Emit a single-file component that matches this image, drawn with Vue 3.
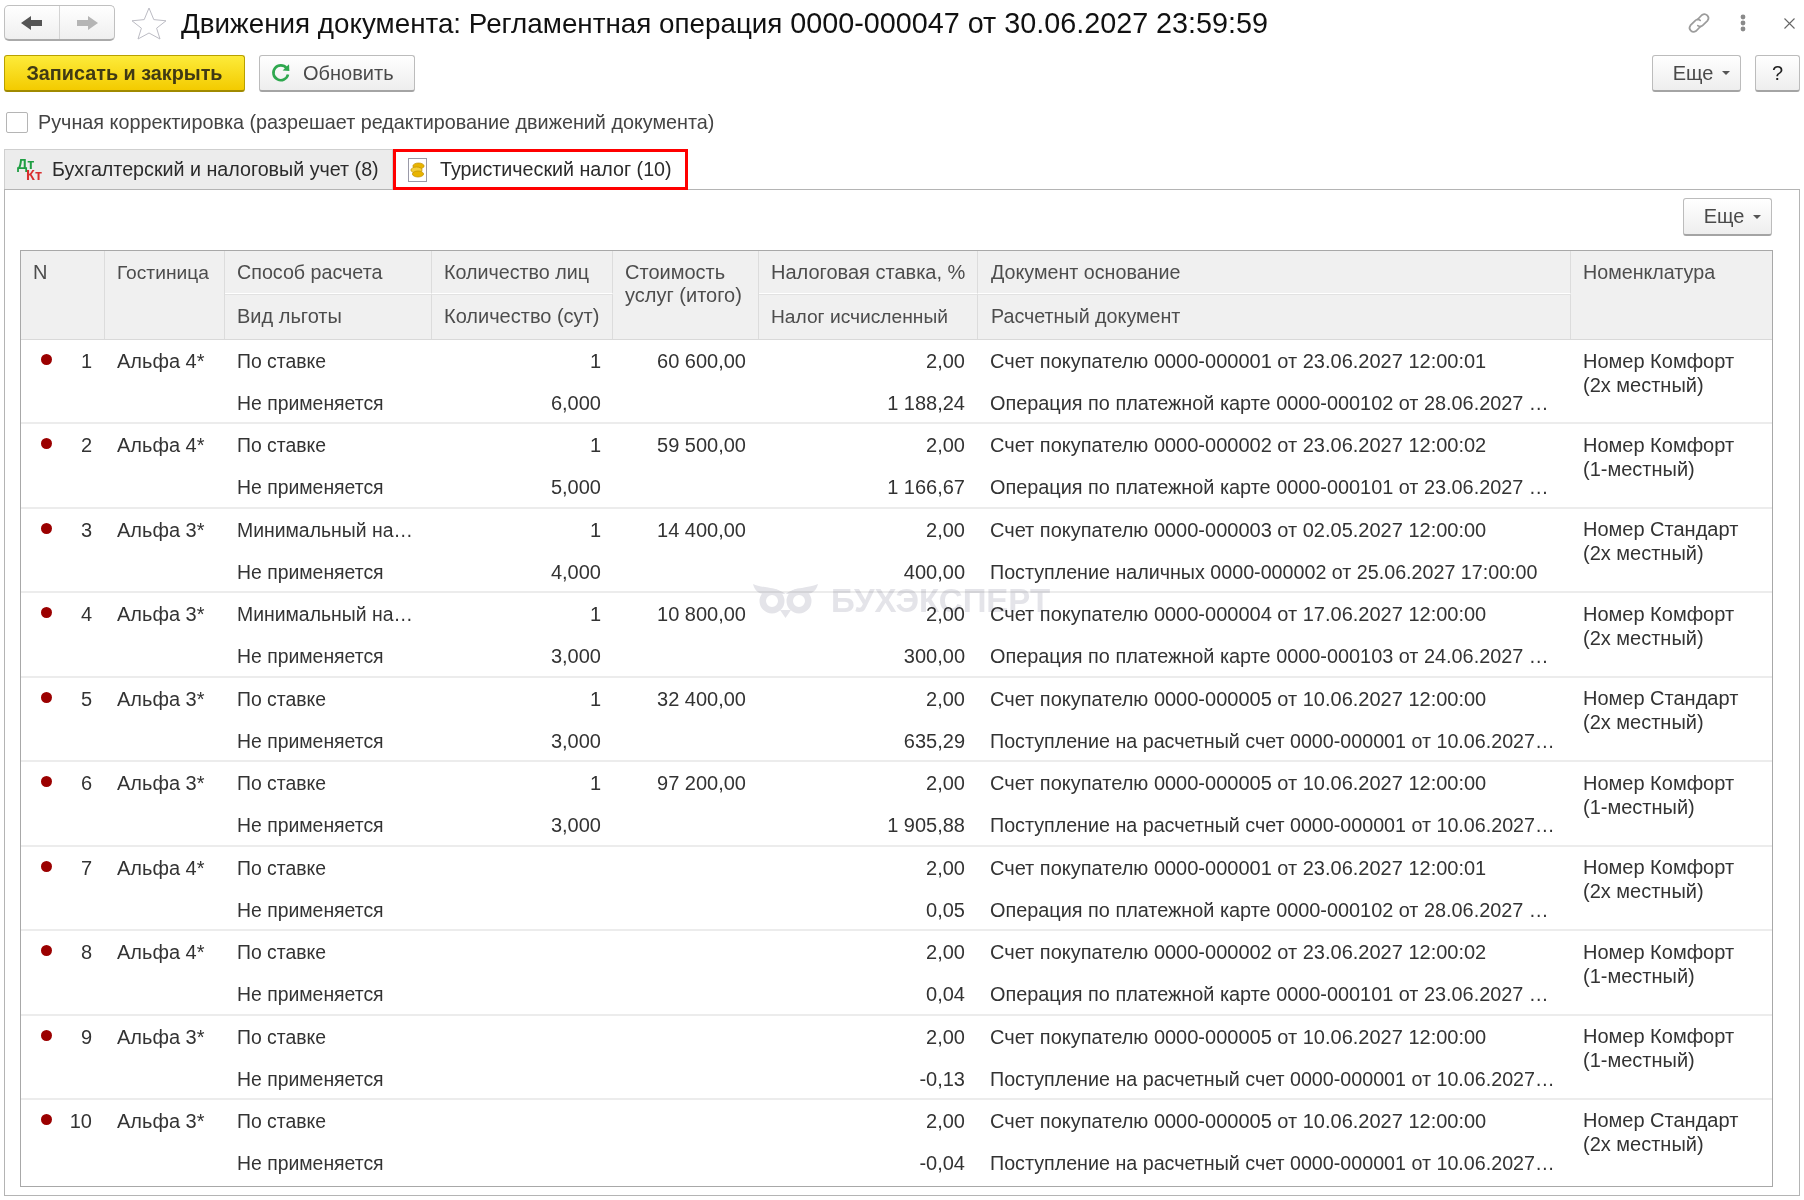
<script setup>
const R = 'Не применяется'
const rows = [
  { n: 1, hotel: 'Альфа 4*', way: 'По ставке', qty: '1', days: '6,000', cost: '60 600,00', tax: '1 188,24', d1: 'Счет покупателю 0000-000001 от 23.06.2027 12:00:01', d2: 'Операция по платежной карте 0000-000102 от 28.06.2027 …', nom: ['Номер Комфорт', '(2х местный)'] },
  { n: 2, hotel: 'Альфа 4*', way: 'По ставке', qty: '1', days: '5,000', cost: '59 500,00', tax: '1 166,67', d1: 'Счет покупателю 0000-000002 от 23.06.2027 12:00:02', d2: 'Операция по платежной карте 0000-000101 от 23.06.2027 …', nom: ['Номер Комфорт', '(1-местный)'] },
  { n: 3, hotel: 'Альфа 3*', way: 'Минимальный на…', qty: '1', days: '4,000', cost: '14 400,00', tax: '400,00', d1: 'Счет покупателю 0000-000003 от 02.05.2027 12:00:00', d2: 'Поступление наличных 0000-000002 от 25.06.2027 17:00:00', nom: ['Номер Стандарт', '(2х местный)'] },
  { n: 4, hotel: 'Альфа 3*', way: 'Минимальный на…', qty: '1', days: '3,000', cost: '10 800,00', tax: '300,00', d1: 'Счет покупателю 0000-000004 от 17.06.2027 12:00:00', d2: 'Операция по платежной карте 0000-000103 от 24.06.2027 …', nom: ['Номер Комфорт', '(2х местный)'] },
  { n: 5, hotel: 'Альфа 3*', way: 'По ставке', qty: '1', days: '3,000', cost: '32 400,00', tax: '635,29', d1: 'Счет покупателю 0000-000005 от 10.06.2027 12:00:00', d2: 'Поступление на расчетный счет 0000-000001 от 10.06.2027…', nom: ['Номер Стандарт', '(2х местный)'] },
  { n: 6, hotel: 'Альфа 3*', way: 'По ставке', qty: '1', days: '3,000', cost: '97 200,00', tax: '1 905,88', d1: 'Счет покупателю 0000-000005 от 10.06.2027 12:00:00', d2: 'Поступление на расчетный счет 0000-000001 от 10.06.2027…', nom: ['Номер Комфорт', '(1-местный)'] },
  { n: 7, hotel: 'Альфа 4*', way: 'По ставке', qty: '', days: '', cost: '', tax: '0,05', d1: 'Счет покупателю 0000-000001 от 23.06.2027 12:00:01', d2: 'Операция по платежной карте 0000-000102 от 28.06.2027 …', nom: ['Номер Комфорт', '(2х местный)'] },
  { n: 8, hotel: 'Альфа 4*', way: 'По ставке', qty: '', days: '', cost: '', tax: '0,04', d1: 'Счет покупателю 0000-000002 от 23.06.2027 12:00:02', d2: 'Операция по платежной карте 0000-000101 от 23.06.2027 …', nom: ['Номер Комфорт', '(1-местный)'] },
  { n: 9, hotel: 'Альфа 3*', way: 'По ставке', qty: '', days: '', cost: '', tax: '-0,13', d1: 'Счет покупателю 0000-000005 от 10.06.2027 12:00:00', d2: 'Поступление на расчетный счет 0000-000001 от 10.06.2027…', nom: ['Номер Комфорт', '(1-местный)'] },
  { n: 10, hotel: 'Альфа 3*', way: 'По ставке', qty: '', days: '', cost: '', tax: '-0,04', d1: 'Счет покупателю 0000-000005 от 10.06.2027 12:00:00', d2: 'Поступление на расчетный счет 0000-000001 от 10.06.2027…', nom: ['Номер Стандарт', '(2х местный)'] }
]
const isTight = (s) => s.startsWith('Поступление')
</script>

<template>
  <div class="page">
    <div class="titlebar">
      <div class="nav">
        <button class="nav-btn">
          <svg width="22" height="14" viewBox="0 0 22 14"><path d="M0 7 L10 0 V4 H21 V10 H10 V14 Z" fill="#555"/></svg>
        </button>
        <button class="nav-btn">
          <svg width="22" height="14" viewBox="0 0 22 14"><path d="M22 7 L12 0 V4 H1 V10 H12 V14 Z" fill="#b5b5b5"/></svg>
        </button>
      </div>
      <svg class="star" width="36" height="33" viewBox="0 0 36 33"><path d="M18 1 L22.8 12.6 L35 13.8 L25.6 21.2 L29 32 L18 26 L7 32 L10.4 21.2 L1 13.8 L13.2 12.6 Z" fill="#fff" stroke="#bcbcc4" stroke-width="1"/></svg>
      <h1 class="title"><span class="t-words">Движения документа: Регламентная операция</span> <span class="t-nums">0000-000047 от 30.06.2027 23:59:59</span></h1>
      <div class="win-icons">
        <svg width="24" height="24" viewBox="0 0 24 24" fill="none" stroke="#9c9c9c" stroke-width="1.7" stroke-linecap="round"><path d="M10.5 8.5 L15 4 a4 4 0 0 1 5.6 5.6 L16 14.2 a4 4 0 0 1 -5.2 .4"/><path d="M13.5 15.5 L9 20 a4 4 0 0 1 -5.6 -5.6 L8 9.8 a4 4 0 0 1 5.2 -.4"/></svg>
        <svg class="dots" width="6" height="18" viewBox="0 0 6 18" fill="#8a8a8a"><circle cx="3" cy="3" r="2.4"/><circle cx="3" cy="9" r="2.4"/><circle cx="3" cy="15" r="2.4"/></svg>
        <svg class="close" width="11" height="11" viewBox="0 0 11 11" stroke="#666" stroke-width="1.1"><path d="M.5 .5 L10.5 10.5 M10.5 .5 L.5 10.5"/></svg>
      </div>
    </div>

    <div class="toolbar">
      <button class="btn primary">Записать и закрыть</button>
      <button class="btn refresh">
        <svg width="20" height="20" viewBox="0 0 20 20" fill="none"><path d="M15.6 5.2 A7.4 7.4 0 1 0 17 11.5" stroke="#2fa84f" stroke-width="2.6"/><path d="M11.6 7.4 L18.4 8 L18 1.2 Z" fill="#2fa84f"/></svg>
        Обновить
      </button>
      <div class="spacer"></div>
      <button class="btn more">Еще <i class="caret"></i></button>
      <button class="btn help">?</button>
    </div>

    <label class="check-row">
      <span class="check"></span>
      Ручная корректировка (разрешает редактирование движений документа)
    </label>

    <div class="tabs">
      <div class="tab inactive">
        <span class="dtkt"><b class="dt">Дт</b><b class="kt">Кт</b></span>
        Бухгалтерский и налоговый учет (8)
      </div>
      <div class="tab active">
        <svg width="19" height="24" viewBox="0 0 19 24"><rect x=".5" y=".5" width="18" height="23" fill="#fff" stroke="#9a9aa8"/><ellipse cx="10.5" cy="8" rx="5.6" ry="3" fill="#e8b400" stroke="#c08f00" stroke-width=".7"/><ellipse cx="8.5" cy="12" rx="5.6" ry="3" fill="#f4cf3a" stroke="#c08f00" stroke-width=".7"/><ellipse cx="10" cy="16" rx="5.6" ry="3" fill="#e8b400" stroke="#c08f00" stroke-width=".7"/></svg>
        Туристический налог (10)
      </div>
    </div>

    <div class="panel">
      <div class="panel-bar">
        <button class="btn more">Еще <i class="caret"></i></button>
      </div>
      <div class="table">
        <div class="grid head">
          <div class="hc span n">N</div>
          <div class="hc span h-narrow">Гостиница</div>
          <div class="hc top h-mid">Способ расчета</div>
          <div class="hc top h-mid">Количество лиц</div>
          <div class="hc span cost">Стоимость<br>услуг (итого)</div>
          <div class="hc top">Налоговая ставка, %</div>
          <div class="hc top h-mid pad13">Документ основание</div>
          <div class="hc span last h-mid">Номенклатура</div>
          <div class="hc bottom c3">Вид льготы</div>
          <div class="hc bottom c4">Количество (сут)</div>
          <div class="hc bottom c6 h-narrow">Налог исчисленный</div>
          <div class="hc bottom c7 h-mid pad13">Расчетный документ</div>
        </div>
        <div v-for="r in rows" :key="r.n" class="grid row">
          <div class="cell num"><i class="dot"></i><span>{{ r.n }}</span></div>
          <div class="cell c2">{{ r.hotel }}</div>
          <div class="cell c3 words">{{ r.way }}</div>
          <div class="cell c4 right">{{ r.qty }}</div>
          <div class="cell c5 right">{{ r.cost }}</div>
          <div class="cell c6 right">2,00</div>
          <div class="cell c7">{{ r.d1 }}</div>
          <div class="cell c8 nom">{{ r.nom[0] }}<br>{{ r.nom[1] }}</div>
          <div class="cell c3 l2 words">{{ R }}</div>
          <div class="cell c4 l2 right">{{ r.days }}</div>
          <div class="cell c6 l2 right">{{ r.tax }}</div>
          <div class="cell c7 l2" :class="{ tight: isTight(r.d2) }">{{ r.d2 }}</div>
        </div>
      </div>
    </div>

    <div class="watermark" aria-hidden="true">
      <svg width="66" height="34" viewBox="0 0 66 34" fill="#e4e4e9"><path d="M0 0 C8 4 24 3 32.5 10 C41 3 57 4 65 0 C63 8 58 10 52 10 L13 10 C7 10 2 8 0 0 Z"/><path d="M27 26 H38 L32.5 34 Z"/><circle cx="19" cy="17" r="9.25" fill="none" stroke="#e4e4e9" stroke-width="6.5"/><circle cx="46" cy="17" r="9.25" fill="none" stroke="#e4e4e9" stroke-width="6.5"/></svg>
      <span>БУХЭКСПЕРТ</span>
    </div>
  </div>
</template>

<style>
html, body { margin: 0; background: #fff; }
</style>

<style scoped>
.page {
  position: relative;
  width: 1804px;
  height: 1200px;
  box-sizing: border-box;
  padding: 5px 4px 0;
  overflow: hidden;
  background: #fff;
  color: #333;
  font-family: "Liberation Sans", Arial, sans-serif;
  font-size: 20px;
}
button { font-family: inherit; margin: 0; }

.titlebar { display: flex; align-items: center; height: 36px; margin-bottom: 14px; }
.nav {
  display: flex;
  width: 111px;
  height: 36px;
  box-sizing: border-box;
  border: 1px solid #c0c0c0;
  border-bottom: 2px solid #aaa;
  border-radius: 5px;
  background: linear-gradient(#fff, #efefef);
}
.nav-btn {
  flex: 1;
  padding: 0;
  border: 0;
  background: none;
  display: flex;
  align-items: center;
  justify-content: center;
}
.nav-btn + .nav-btn { border-left: 1px solid #d4d4d4; }
.star { margin-left: 16px; }
.title { margin: 0 0 0 14px; font-size: 28.2px; font-weight: 400; color: #111; white-space: nowrap; }
.t-words { font-size: 27.8px; }
.t-nums { font-size: 28.75px; }
.win-icons { margin-left: auto; display: flex; align-items: center; padding-right: 5px; }
.dots { margin-left: 29px; }
.close { margin-left: 38px; }

.toolbar { display: flex; align-items: stretch; height: 37px; margin-bottom: 20px; }
.spacer { flex: 1; }
.btn {
  box-sizing: border-box;
  height: 37px;
  padding: 0;
  border: 1px solid #bcbcbc;
  border-bottom: 2px solid #a4a4a4;
  border-radius: 3px;
  background: linear-gradient(#fff, #eee);
  color: #4a4a4a;
  font-size: 20px;
  display: flex;
  align-items: center;
  justify-content: center;
}
.primary {
  width: 241px;
  border-color: #b8a000 #b8a000 #a08a00;
  background: linear-gradient(#fdeb3a, #f3cb00);
  color: #403a14;
  font-weight: 700;
  font-size: 19.8px;
}
.refresh { width: 156px; margin-left: 14px; gap: 12px; justify-content: flex-start; padding-left: 11px; }
.more { width: 89px; padding-left: 10px; gap: 9px; }
.help { width: 45px; margin-left: 14px; color: #222; }
.caret { width: 0; height: 0; border: 4px solid transparent; border-top-color: #555; border-bottom: 0; }

.check-row { display: flex; align-items: center; height: 21px; margin: 0 0 16px 2px; gap: 10px; color: #444; font-size: 19.8px; }
.check { width: 22px; height: 21px; box-sizing: border-box; border: 1px solid #b5b5b5; border-radius: 2px; background: #fff; }

.tabs { display: flex; height: 40px; font-size: 19.7px; color: #2b2b2b; }
.tab { display: flex; align-items: center; box-sizing: border-box; white-space: nowrap; }
.inactive {
  width: 389px;
  padding-left: 12px;
  gap: 10px;
  background: #ececec;
  border: 1px solid #cfcfcf;
  border-bottom: 0;
}
.active {
  width: 295px;
  height: 41px;
  padding-left: 12px;
  gap: 13px;
  border: 3px solid #f00;
  background: #fff;
  position: relative;
  z-index: 1;
}
.dtkt { position: relative; width: 25px; height: 22px; font-size: 14.5px; }
.dtkt b { position: absolute; font-weight: 700; line-height: 11px; }
.dt { left: 0; top: 0; color: #1f9e43; }
.kt { right: 0; bottom: 0; color: #d92f2f; }

.panel {
  width: 1796px;
  height: 1007px;
  box-sizing: border-box;
  border: 1px solid #b4b4b4;
  padding: 8px 27px 0 15px;
}
.panel-bar { display: flex; justify-content: flex-end; height: 38px; margin-bottom: 14px; }
.panel-bar .btn { height: 38px; }

.table {
  width: 1753px;
  height: 937px;
  box-sizing: border-box;
  border: 1px solid #a8a8a8;
  display: flex;
  flex-direction: column;
}
.grid {
  display: grid;
  grid-template-columns: 84px 120px 207px 181px 146px 219px 593px 201px;
}
.head {
  height: 88px;
  flex: none;
  grid-template-rows: 43px 45px;
  background: #f0f0f0;
  border-bottom: 1px solid #d9d9d9;
  box-sizing: content-box;
  color: #4d4d4d;
}
.hc {
  box-sizing: border-box;
  padding: 0 12px;
  border-right: 1px solid #dcdcdc;
  line-height: 23px;
  white-space: nowrap;
}
.hc.span { grid-row: 1 / span 2; padding-top: 10px; }
.hc.last { border-right: 0; }
.hc.top { padding-top: 10px; border-bottom: 1px solid #fff; }
.hc.bottom { grid-row: 2; padding-top: 10px; border-top: 1px solid #e2e2e2; }
.hc.c3 { grid-column: 3; }
.hc.c4 { grid-column: 4; }
.hc.c6 { grid-column: 6; }
.hc.c7 { grid-column: 7; }
.h-narrow { font-size: 19.2px; }
.h-mid { font-size: 19.7px; }
.hc.pad13 { padding-left: 13px; }
.cost { padding-left: 12px; }

.row {
  height: 84.45px;
  flex: none;
  box-sizing: border-box;
  grid-template-rows: 42px 42px;
  border-bottom: 2px solid #ececec;
}
.row:last-child { flex: 1; border-bottom: 0; }
.cell { box-sizing: border-box; padding: 0 12px; line-height: 42px; white-space: nowrap; overflow: hidden; }
.right { text-align: right; }
.words { font-size: 19.4px; }
.c2 { grid-column: 2; }
.c3 { grid-column: 3; }
.c4 { grid-column: 4; }
.c5 { grid-column: 5; padding-right: 13px; }
.c6 { grid-column: 6; padding-right: 13px; }
.c7 { grid-column: 7; padding-left: 12px; }
.c7.l2 { font-size: 19.88px; }
.c7.tight { font-size: 19.72px; }
.c8 { grid-column: 8; }
.l2 { grid-row: 2; }
.num { grid-column: 1; display: flex; align-items: center; justify-content: space-between; padding: 0 13px 0 20px; }
.dot { width: 11px; height: 11px; margin-top: -3px; border-radius: 50%; background: #9b0000; }
.nom { grid-row: 1 / span 2; padding-top: 8.5px; line-height: 24px; }

.watermark {
  position: absolute;
  left: 753px;
  top: 582px;
  display: flex;
  align-items: center;
  gap: 12px;
  color: #e4e4e9;
  font-size: 33px;
  font-weight: 700;
  mix-blend-mode: multiply;
  pointer-events: none;
}
</style>
